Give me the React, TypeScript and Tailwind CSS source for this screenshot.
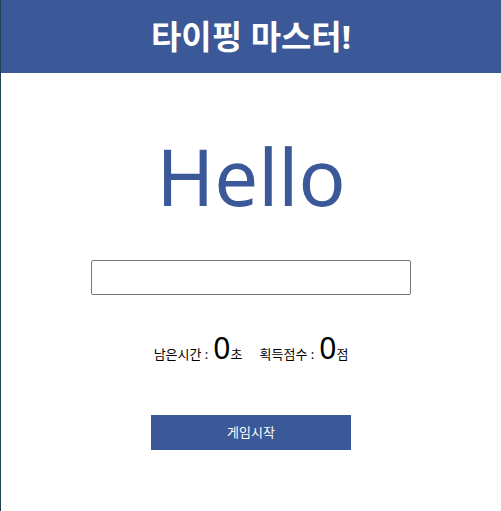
import React from 'react';

const font = { fontFamily: '"Noto Sans", "Noto Sans CJK KR", sans-serif' };

const App = () => {
  return (
    <div className="min-h-[511px] border-l border-[#1d4450] bg-white" style={font}>
      <header className="flex h-[73px] items-center justify-center bg-[#3b5998]">
        <h1 className="text-[33px] font-bold text-white">타이핑 마스터!</h1>
      </header>

      <div className="flex flex-col items-center">
        <div className="mt-[57px] text-[78px] leading-[1.2] text-[#3b5998]">Hello</div>

        <input
          type="text"
          className="mt-[36px] h-[35px] w-[320px] rounded-[2px] border border-[#767676] bg-white px-1"
        />

        <div className="mt-[38px] flex items-baseline text-[13px] text-black">
          <span>남은시간 :</span>
          <span className="ml-[5px] text-[30px] leading-none">0</span>
          <span>초</span>
          <span className="ml-[17px]">획득점수 :</span>
          <span className="ml-[5px] text-[30px] leading-none">0</span>
          <span>점</span>
        </div>

        <button className="mt-[51px] h-[35px] w-[200px] bg-[#3b5998] text-[13px] text-white">
          게임시작
        </button>
      </div>
    </div>
  );
};

export default App;
